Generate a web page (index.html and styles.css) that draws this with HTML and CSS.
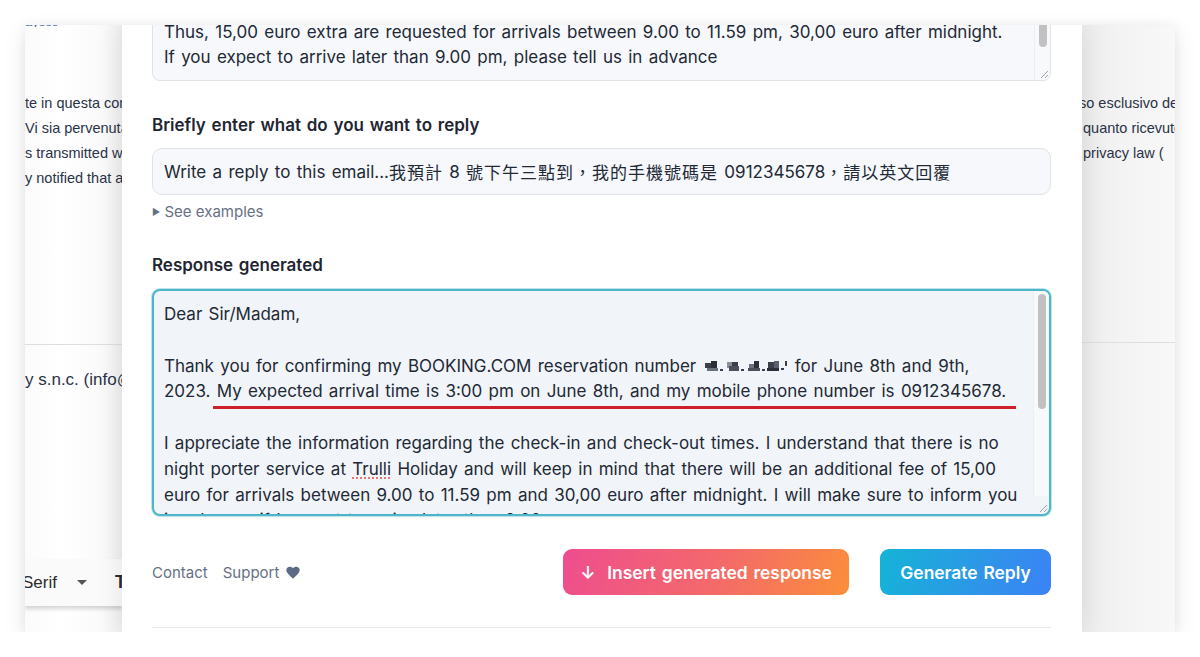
FILE: index.html
```html
<!DOCTYPE html>
<html lang="en">
<head>
  <meta charset="UTF-8">
  <meta name="viewport" content="width=device-width, initial-scale=1.0">
  <title>Reply Assistant</title>
  <link rel="stylesheet" href="styles.css">
</head>
<body>
  <div class="frame">
    <!-- email behind the panel, left part -->
    <div class="mail mail-left">
      <div class="mail-link">aysss</div>
      <div class="mail-text">
        <div>te in questa comunicazione</div>
        <div>Vi sia pervenuta per errore</div>
        <div>s transmitted with this</div>
        <div>y notified that any</div>
      </div>
      <div class="mail-rule"></div>
      <div class="mail-sender">y s.n.c. (info@trulliholiday.it)</div>
      <div class="toolbar">
        <span class="tb-font">Serif</span>
        <span class="tb-caret"></span>
        <span class="tb-sep"></span>
        <span class="tb-icon">T</span>
      </div>
    </div>

    <!-- reply panel -->
    <div class="panel">
      <div class="box box-email">
        <div class="box-text">
          <div class="line">There is no night porter service at the property after 9.00 pm.</div>
          <div class="line">Thus, 15,00 euro extra are requested for arrivals between 9.00 to 11.59 pm, 30,00 euro after midnight.</div>
          <div class="line">If you expect to arrive later than 9.00 pm, please tell us in advance</div>
        </div>
        <div class="scroll scroll-email"><div class="thumb thumb-email"></div></div>
        <svg class="grip" width="10" height="10" viewBox="0 0 10 10"><path d="M9 2 L2 9 M9 6 L6 9" stroke="#9aa1aa" stroke-width="1"/></svg>
      </div>

      <div class="label">Briefly enter what do you want to reply</div>
      <div class="input">Write a reply to this email...<span class="cjk">我預計</span> 8 <span class="cjk">號下午三點到，我的手機號碼是</span> 0912345678<span class="cjk">，請以英文回覆</span></div>
      <div class="examples"><span class="tri">&#9654;</span> See examples</div>

      <div class="label label-response">Response generated</div>
      <div class="box box-response">
        <div class="box-text">
          <div class="line">Dear Sir/Madam,</div>
          <div class="line">&nbsp;</div>
          <div class="line">Thank you for confirming my BOOKING.COM reservation number <svg class="redact" width="86" height="16" viewBox="0 0 86 16">
            <rect x="2" y="5" width="6" height="5" fill="#3a3f4a"/><rect x="8" y="3" width="6" height="7" fill="#2b2f38"/><rect x="4" y="10" width="11" height="3" fill="#6a707c"/><rect x="17" y="11" width="3" height="2" fill="#3a3f4a"/>
            <rect x="24" y="4" width="5" height="6" fill="#8a909a"/><rect x="29" y="4" width="6" height="4" fill="#3a3f4a"/><rect x="26" y="8" width="10" height="5" fill="#4a505c"/><rect x="38" y="11" width="3" height="2" fill="#3a3f4a"/>
            <rect x="46" y="6" width="5" height="5" fill="#6a707c"/><rect x="51" y="3" width="5" height="8" fill="#2b2f38"/><rect x="45" y="10" width="12" height="3" fill="#4a505c"/><rect x="59" y="11" width="3" height="2" fill="#3a3f4a"/>
            <rect x="65" y="4" width="6" height="6" fill="#3a3f4a"/><rect x="71" y="3" width="5" height="7" fill="#5a606c"/><rect x="64" y="10" width="12" height="3" fill="#2b2f38"/><rect x="78" y="10" width="3" height="2" fill="#3a3f4a"/><rect x="82" y="3" width="2" height="5" fill="#3a3f4a"/>
          </svg> for June 8th and 9th,</div>
          <div class="line">2023. My expected arrival time is 3:00 pm on June 8th, and my mobile phone number is 0912345678.</div>
          <div class="line">&nbsp;</div>
          <div class="line">I appreciate the information regarding the check-in and check-out times. I understand that there is no</div>
          <div class="line">night porter service at <span class="typo">Trulli</span> Holiday and will keep in mind that there will be an additional fee of 15,00</div>
          <div class="line">euro for arrivals between 9.00 to 11.59 pm and 30,00 euro after midnight. I will make sure to inform you</div>
          <div class="line">in advance if I expect to arrive later than 9.00 pm.</div>
        </div>
        <div class="scroll scroll-response"><div class="thumb thumb-response"></div></div>
        <div class="mark"></div>
        <svg class="grip" width="10" height="10" viewBox="0 0 10 10"><path d="M9 2 L2 9 M9 6 L6 9" stroke="#9aa1aa" stroke-width="1"/></svg>
      </div>

      <div class="footer">
        <div class="links">
          <span>Contact</span>
          <span>Support <svg class="heart" width="14" height="13" viewBox="0 0 24 22"><path d="M12 21.5 L10.3 20 C4.2 14.5 0.5 11.1 0.5 6.9 C0.5 3.5 3.1 1 6.4 1 C8.3 1 10.5 1.9 12 3.6 C13.5 1.9 15.7 1 17.6 1 C20.9 1 23.5 3.5 23.5 6.9 C23.5 11.1 19.8 14.5 13.7 20 Z" fill="#5b6b85"/></svg></span>
        </div>
        <div class="actions">
          <div class="btn btn-insert">&#8595;&nbsp; Insert generated response</div>
          <div class="btn btn-generate">Generate Reply</div>
        </div>
      </div>
      <div class="panel-rule"></div>
    </div>

    <!-- email behind the panel, right part -->
    <div class="mail mail-right">
      <div class="mail-text">
        <div>so esclusivo del</div>
        <div>&nbsp;quanto ricevuto</div>
        <div>&nbsp;privacy law (</div>
      </div>
      <div class="mail-rule mail-rule-right"></div>
    </div>
  </div>
</body>
</html>
```

FILE: styles.css
```css
body {
  margin: 0;
  background: #fff;
  font-family: "Inter", "Noto Sans CJK TC", sans-serif;
}

.frame {
  margin: 25px 0 0 25px;
  width: 1150px;
  height: 607px;
  display: flex;
  overflow: hidden;
  background: #fff;
  box-shadow: 0 8px 22px rgba(0, 0, 0, 0.10), 0 0 10px rgba(0, 0, 0, 0.05);
}

/* background email */
.mail {
  flex: 0 0 auto;
  overflow: hidden;
  white-space: nowrap;
  font-family: "Liberation Sans", Arial, sans-serif;
  font-size: 14.5px;
  color: #2a3347;
  display: flex;
  flex-direction: column;
}

.mail-left {
  width: 97px;
  background: linear-gradient(to right, #fbfbfb 0%, #fff 40%, #fafafa 80%, #f0f0f0 100%);
}

.mail-right {
  width: 93px;
  background: linear-gradient(to right, #ededed 0%, #f3f3f3 40%, #f8f8f8 100%);
}

.mail-link {
  margin-top: -11px;
  height: 13px;
  color: #4a6fb0;
  text-decoration: underline;
  font-size: 13px;
  overflow: hidden;
}

.mail-text {
  margin-top: 64px;
  line-height: 25px;
}

.mail-right .mail-text {
  margin-top: 66px;
  margin-left: -3px;
}

.mail-rule {
  margin-top: 153px;
  height: 1px;
  background: #dedede;
}

.mail-rule-right {
  margin-top: 176px;
}

.mail-sender {
  margin-top: 23px;
  font-size: 17px;
  line-height: 24px;
}

.toolbar {
  margin-top: 167px;
  height: 47px;
  background: #fafafa;
  box-shadow: 0 3px 4px rgba(0, 0, 0, 0.16);
  display: flex;
  align-items: center;
  font-size: 17px;
  color: #2b2b2b;
}

.tb-font {
  margin-left: -3px;
}

.tb-caret {
  margin-left: 20px;
  border-left: 5px solid transparent;
  border-right: 5px solid transparent;
  border-top: 5px solid #555;
}

.tb-sep {
  margin-left: 13px;
  width: 1px;
  height: 26px;
  background: #dcdcdc;
}

.tb-icon {
  margin-left: 15px;
  font-weight: bold;
  font-size: 18px;
}

/* reply panel */
.panel {
  flex: 0 0 960px;
  box-sizing: border-box;
  padding: 0 31px 0 30px;
  background: #fff;
  box-shadow: 0 0 26px rgba(0, 0, 0, 0.10);
  position: relative;
  z-index: 1;
  color: #1e2533;
  word-spacing: 1.5px;
}

.box {
  position: relative;
  display: flex;
  background: #f6f8fb;
  border: 1px solid #dfe3e8;
  border-radius: 8px;
  font-size: 17px;
  color: #222936;
  overflow: hidden;
}

.box-text {
  flex: 1;
  overflow: hidden;
}

.line {
  white-space: nowrap;
  line-height: 25px;
}

.box-email {
  margin-top: -37px;
  border-top: none;
  border-radius: 0 0 8px 8px;
}

.box-email .box-text {
  padding: 7px 11px 10px;
}

.scroll {
  flex: 0 0 15px;
  border-left: 1px solid #eceef1;
  background: #f8f9fb;
}

.thumb {
  width: 8px;
  margin: 0 auto;
  background: #c1c1c1;
  border-radius: 4px;
}

.thumb-email {
  margin-top: 29px;
  height: 30px;
}

.grip {
  position: absolute;
  right: 1px;
  bottom: 1px;
}

.label {
  margin-top: 33px;
  font-size: 17px;
  font-weight: 600;
  line-height: 22px;
  color: #1f2633;
}

.input {
  margin-top: 12px;
  height: 47px;
  box-sizing: border-box;
  padding: 0 11px;
  display: flex;
  align-items: center;
  background: #f6f8fb;
  border: 1px solid #dfe3e8;
  border-radius: 10px;
  font-size: 17px;
  color: #222936;
  white-space: pre;
}

.cjk {
  letter-spacing: 1px;
}

.examples {
  margin-top: 8px;
  font-size: 15px;
  line-height: 18px;
  color: #667085;
  word-spacing: 0;
}

.tri {
  font-size: 9px;
  vertical-align: 2px;
}

.label-response {
  margin-top: 33px;
}

.box-response {
  margin-top: 13px;
  height: 227px;
  box-sizing: border-box;
  border: 2px solid #4db6c8;
  background: #f1f4f8;
  box-shadow: 0 0 0 1px #bfe5ec;
}

.box-response .box-text {
  padding: 11px 10px 0;
}

.box-response .line {
  line-height: 25.8px;
}

.scroll-response {
  margin-bottom: 18px;
}

.thumb-response {
  margin-top: 3px;
  height: 115px;
}

.redact {
  vertical-align: -2px;
}

.typo {
  text-decoration: underline dotted #e0605a;
  text-underline-offset: 3px;
}

/* annotation drawn over the reply text */
.mark {
  position: absolute;
  left: 59px;
  top: 115px;
  width: 803px;
  height: 3px;
  background: #cf2027;
}

.footer {
  margin-top: 33px;
  display: flex;
  justify-content: space-between;
  align-items: center;
}

.links {
  display: flex;
  gap: 15px;
  font-size: 15px;
  color: #667085;
  word-spacing: 0;
}

.heart {
  vertical-align: -1px;
  margin-left: 2px;
}

.actions {
  display: flex;
  gap: 31px;
}

.btn {
  height: 46px;
  box-sizing: border-box;
  display: flex;
  align-items: center;
  justify-content: center;
  border-radius: 9px;
  color: #fff;
  font-size: 17.4px;
  font-weight: 600;
}

.btn-insert {
  width: 286px;
  background: linear-gradient(110deg, #ee4d8e 0%, #f46a6a 55%, #fb8e3a 100%);
}

.btn-generate {
  width: 171px;
  background: linear-gradient(110deg, #14b4d6 0%, #2e95e8 60%, #3b82f6 100%);
}

.panel-rule {
  margin-top: 32px;
  height: 1px;
  background: #e6e8eb;
}
```
